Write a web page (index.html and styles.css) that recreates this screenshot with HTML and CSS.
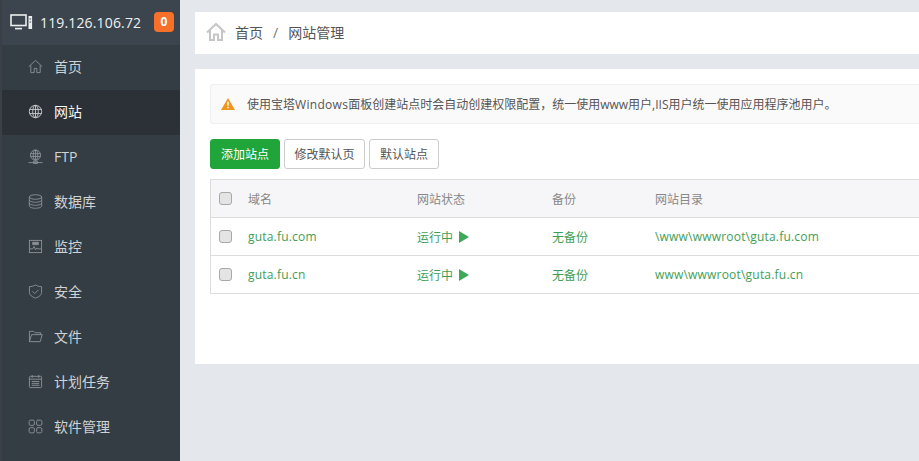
FILE: index.html
```html
<!DOCTYPE html>
<html lang="zh">
<head>
<meta charset="utf-8">
<title>网站管理</title>
<link rel="stylesheet" href="styles.css">
</head>
<body>
<aside class="sidebar">
  <div class="host">
    <svg class="host-icon" width="23" height="16" viewBox="0 0 23 16" fill="none" stroke="#eceff1" stroke-width="1.6"><rect x="1" y="1" width="15" height="10.5"/><path d="M5 14.600h7" stroke-width="1.6"/><rect x="18.500" y="2" width="3.600" height="13" fill="#eceff1" stroke="none"/><path d="M19.500 5h1.600M19.500 8h1.600" stroke="#3c444d" stroke-width="1"/></svg>
    <span class="ip">119.126.106.72</span>
    <span class="badge">0</span>
  </div>
  <nav class="nav">
    <a class="nav-item"><svg viewBox="0 0 16 16" class="ico"><path d="M.8 8.200 8 1.500l7.200 6.700M3 7v7.500h3.600V10h2.800v4.500H13V7"/></svg>首页</a>
    <a class="nav-item active"><svg viewBox="0 0 16 16" class="ico"><circle cx="8" cy="8" r="6.600"/><ellipse cx="8" cy="8" rx="3" ry="6.600"/><path d="M8 1.400v13.200M1.600 5.800h12.800M1.600 10.200h12.800"/></svg>网站</a>
    <a class="nav-item"><svg viewBox="0 0 16 16" class="ico"><circle cx="8" cy="6.500" r="5.400"/><ellipse cx="8" cy="6.500" rx="2.400" ry="5.400"/><path d="M8 1v11M2.800 5h10.400M2.800 8h10.400M.5 14.500h15M6 13h4v2.500H6z"/></svg>FTP</a>
    <a class="nav-item"><svg viewBox="0 0 16 16" class="ico"><ellipse cx="8" cy="3.200" rx="6.600" ry="2.400"/><path d="M1.400 3.200v9.600c0 1.300 3 2.400 6.600 2.400s6.600-1.100 6.600-2.400V3.200M1.400 6.400c0 1.300 3 2.400 6.600 2.400s6.600-1.100 6.600-2.400M1.400 9.600c0 1.300 3 2.400 6.600 2.400s6.600-1.100 6.600-2.400"/></svg>数据库</a>
    <a class="nav-item"><svg viewBox="0 0 16 16" class="ico"><rect x="1.500" y="1.500" width="13" height="13"/><path d="M1.500 10.500h3.500l1.500-2.500 1.500 3.500 1.500-2 1 1h3.500"/><path d="M5 3.500h6v2.500H5z" fill="#8a9095"/></svg>监控</a>
    <a class="nav-item"><svg viewBox="0 0 16 16" class="ico"><path d="M8 1c2 1.200 4 1.800 6.500 1.800v6c0 3-3 5.200-6.500 6.200-3.500-1-6.500-3.200-6.500-6.200v-6C4 2.800 6 2.200 8 1z"/><path d="m4.800 7.800 2.400 2.400 4-4"/></svg>安全</a>
    <a class="nav-item"><svg viewBox="0 0 16 16" class="ico"><path d="M1.500 13.500v-11h4.500l1.500 1.500h6v2M1.500 13.500h11.500l2.200-7.500H3.800z"/></svg>文件</a>
    <a class="nav-item"><svg viewBox="0 0 16 16" class="ico"><rect x="1.500" y="2.500" width="13" height="12" rx="1"/><path d="M4.500 1v3M11.500 1v3M1.500 5.500h13M4 8h8M4 10h8M4 12h8"/></svg>计划任务</a>
    <a class="nav-item"><svg viewBox="0 0 16 16" class="ico"><rect x="1.200" y="1.200" width="5.600" height="5.600" rx="1.500"/><rect x="9.200" y="1.200" width="5.600" height="5.600" rx="1.500"/><rect x="1.200" y="9.200" width="5.600" height="5.600" rx="1.500"/><rect x="9.200" y="9.200" width="5.600" height="5.600" rx="1.500"/></svg>软件管理</a>
  </nav>
</aside>
<main class="main">
  <div class="crumb">
    <svg class="crumb-home" width="20" height="20" viewBox="0 0 20 20" fill="none" stroke="#c6c6c6" stroke-width="2"><path d="M1 10.500 10 2l9 8.500M4 8.500V18h4v-5.500h4V18h4V8.500"/></svg>
    <span>首页</span><span class="sep">/</span><span>网站管理</span>
  </div>
  <section class="card">
    <div class="alert">
      <svg width="14" height="12" viewBox="0 0 14 12"><path d="M7 0 14 12H0z" fill="#f0961e"/><path d="M6.300 3.800h1.400v4H6.300zM6.300 8.800h1.400v1.400H6.300z" fill="#fff"/></svg>
      <span>使用宝塔<span class="wide">Windows</span>面板创建站点时会自动创建权限配置，统一使用www用户,IIS用户统一使用应用程序池用户。</span>
    </div>
    <div class="actions">
      <button class="btn btn-primary">添加站点</button>
      <button class="btn btn-tight">修改默认页</button>
      <button class="btn">默认站点</button>
    </div>
    <div class="table">
      <div class="row head">
        <span class="c0"><i class="check"></i></span><span class="c1">域名</span><span class="c2">网站状态</span><span class="c3">备份</span><span class="c4">网站目录</span>
      </div>
      <div class="row">
        <span class="c0"><i class="check"></i></span><span class="c1">guta.fu.com</span><span class="c2">运行中<svg class="play" width="10" height="12" viewBox="0 0 10 12"><path d="M0 0 10 6 0 12z" fill="#3fa95a"/></svg></span><span class="c3">无备份</span><span class="c4">\www\wwwroot\guta.fu.com</span>
      </div>
      <div class="row">
        <span class="c0"><i class="check"></i></span><span class="c1">guta.fu.cn</span><span class="c2">运行中<svg class="play" width="10" height="12" viewBox="0 0 10 12"><path d="M0 0 10 6 0 12z" fill="#3fa95a"/></svg></span><span class="c3">无备份</span><span class="c4">www\wwwroot\guta.fu.cn</span>
      </div>
    </div>
  </section>
</main>
</body>
</html>
```
FILE: styles.css
```css
* { box-sizing: border-box; }
html, body { height: 100%; }
body {
  margin: 0;
  display: flex;
  overflow: hidden;
  background: #e4e7ec;
  font-family: "Open Sans", "Noto Sans CJK SC", sans-serif;
  color: #555;
}
.sidebar {
  flex: 0 0 180px;
  height: 461px;
  background: #353d44;
  border-left: 2px solid #3a4046;
  overflow: hidden;
}
.host {
  height: 45px;
  margin-left: -2px;
  padding: 0 6px 1px 10px;
  display: flex;
  align-items: center;
  background: #3c444d;
  color: #eef1f3;
}
.host-icon { flex: none; margin-right: 7px; }
.ip { font-size: 14px; letter-spacing: .15px; flex: 1; white-space: nowrap; }
.badge {
  width: 20px;
  height: 20px;
  border-radius: 4px;
  background: #f7702a;
  color: #fff;
  font-size: 12px;
  font-weight: 700;
  line-height: 20px;
  text-align: center;
}
.nav { display: flex; flex-direction: column; }
.nav-item {
  height: 45px;
  margin-left: -2px;
  padding: 0 0 3px 28px;
  display: flex;
  align-items: center;
  gap: 11px;
  font-size: 14px;
  color: #cfd3d6;
}
.nav-item.active {
  background: #2c3138;
  border-left: 2px solid #20a53a;
  padding-left: 26px;
  color: #f6f7f8;
}
.nav-item.active .ico { stroke: #c5c8ca; }
.ico {
  flex: none;
  width: 15px;
  height: 15px;
  fill: none;
  stroke: #8a9095;
  stroke-width: 1;
}
.main {
  flex: 0 0 739px;
  padding: 12px 0 0 15px;
}
.crumb {
  height: 42px;
  padding: 0 0 2px 11px;
  display: flex;
  align-items: center;
  background: #fff;
  font-size: 14px;
  color: #555;
}
.crumb-home { margin-right: 9px; }
.sep { margin: 0 10px; color: #777; }
.card {
  height: 295px;
  margin-top: 15px;
  padding: 15px 0 0 15px;
  background: #fff;
}
.alert {
  height: 40px;
  padding-left: 10px;
  display: flex;
  align-items: center;
  gap: 12px;
  background: #fafafa;
  border: 1px solid #f0f0f0;
  border-right: 0;
  border-radius: 3px 0 0 3px;
  font-size: 12px;
  color: #555;
}
.wide { letter-spacing: .3px; }
.actions { margin-top: 15px; display: flex; gap: 4px; }
.btn {
  height: 30px;
  padding: 0 10px;
  background: #fff;
  border: 1px solid #ccc;
  border-radius: 3px;
  font: 12px "Open Sans", "Noto Sans CJK SC", sans-serif;
  color: #555;
}
.btn-tight { padding: 0 9.5px; }
.btn-primary {
  background: #20a53a;
  border-color: #20a53a;
  color: #fff;
}
.table {
  margin-top: 10px;
  width: 100%;
  border: 1px solid #ddd;
  border-right: 0;
  border-bottom: 0;
  font-size: 12px;
}
.row {
  height: 38px;
  display: flex;
  align-items: center;
  border-bottom: 1px solid #ddd;
  color: #3f9e58;
}
.row.head {
  background: #f6f6f8;
  color: #888;
}
.c0 { width: 37px; padding-left: 8px; display: flex; }
.c1 { width: 169px; letter-spacing: .2px; }
.c2 { width: 135px; display: flex; align-items: center; }
.c3 { width: 103px; }
.c4 { flex: 1; letter-spacing: .2px; }
.row.head .c1, .row.head .c4 { letter-spacing: 0; }
.check {
  width: 13px;
  height: 13px;
  background: #e4e4e4;
  border: 1px solid #a8a8a8;
  border-radius: 3px;
}
.play { margin-left: 6px; }
```
